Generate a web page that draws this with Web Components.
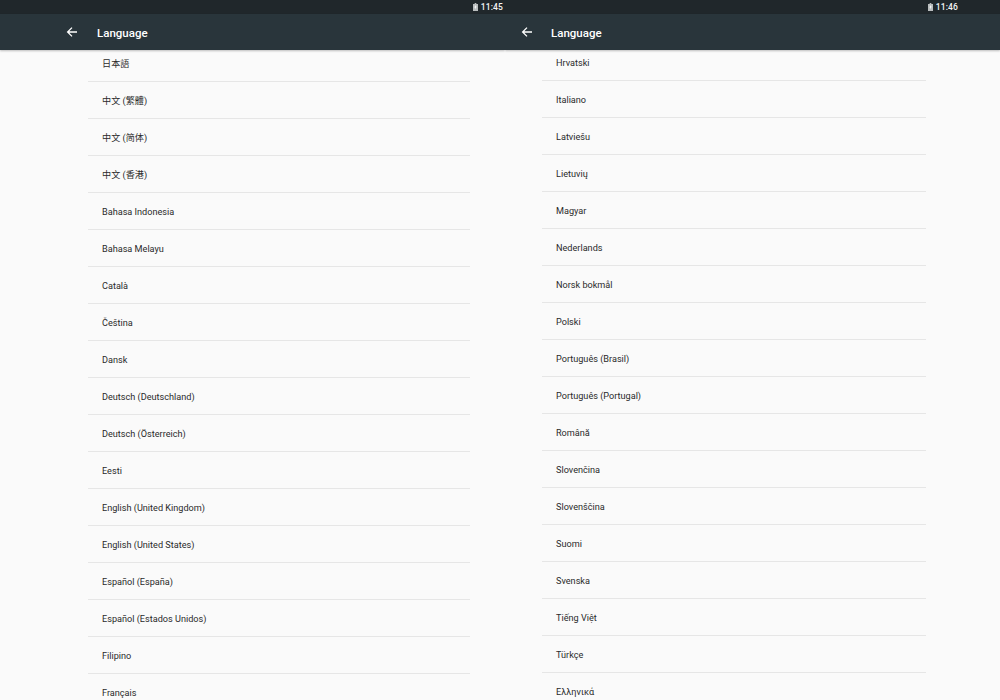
<!DOCTYPE html>
<html><head><meta charset="utf-8"><style>
html,body{margin:0;padding:0;width:1000px;height:700px;overflow:hidden;background:#fafafa}
body{font-family:Roboto,"Noto Sans CJK TC","Liberation Sans",sans-serif}
#root{display:grid;grid-template-columns:505px 495px;height:700px}
</style></head><body>
<div id="root">
<settings-panel time="11:45" list-top="-5" list-left="88" list-width="382" bar-left="66" title-gap="19" clock-right="2" items="日本語|中文 (繁體)|中文 (简体)|中文 (香港)|Bahasa Indonesia|Bahasa Melayu|Català|Čeština|Dansk|Deutsch (Deutschland)|Deutsch (Österreich)|Eesti|English (United Kingdom)|English (United States)|Español (España)|Español (Estados Unidos)|Filipino|Français"></settings-panel>
<settings-panel time="11:46" list-top="-6" list-left="37" list-width="384" bar-left="16" title-gap="18" clock-right="42" items="Hrvatski|Italiano|Latviešu|Lietuvių|Magyar|Nederlands|Norsk bokmål|Polski|Português (Brasil)|Português (Portugal)|Română|Slovenčina|Slovenščina|Suomi|Svenska|Tiếng Việt|Türkçe|Ελληνικά"></settings-panel>
</div>
<script>
class StatusBar extends HTMLElement{
  constructor(){super();this.attachShadow({mode:'open'}).innerHTML=`<style>
  :host{display:flex;justify-content:flex-end;align-items:center;gap:3px;height:14px;background:#20272b;color:#f5f6f6;font:500 8.5px/14px Roboto,sans-serif;letter-spacing:.15px}
  svg{display:block}</style>
  <svg width="5" height="8" viewBox="0 0 6 9" preserveAspectRatio="none"><path d="M2 0h2v1h2v8H0V1h2z" fill="#b9bdbe"/><path d="M3.4 2 1.6 5h1.2L2.5 7.4 4.4 4H3.2z" fill="#fff"/></svg><span><slot></slot></span>`;}
}
class AppBar extends HTMLElement{
  constructor(){super();this.attachShadow({mode:'open'}).innerHTML=`<style>
  :host{display:flex;align-items:center;height:36px;background:#29353b;color:#fff;position:relative;z-index:1;box-shadow:0 1px 2px rgba(0,0,0,.25);box-sizing:border-box}
  svg{display:block;flex:none}
  span{margin-left:var(--title-gap,18px);padding-top:2px;font:500 11.5px/34px Roboto,sans-serif}</style>
  <svg width="12" height="12" viewBox="0 0 12 12"><path d="M11 6H2M6 1.6 1.6 6 6 10.4" fill="none" stroke="#fff" stroke-width="1.3"/></svg><span><slot></slot></span>`;}
}
class LangRow extends HTMLElement{
  constructor(){super();this.attachShadow({mode:'open'}).innerHTML=`<style>
  :host{display:flex;align-items:center;box-sizing:border-box;height:37px;padding:2px 0 0 14px;border-bottom:1px solid #e6e6e6;color:#2a2a2a;font:400 9.15px/12px Roboto,"Noto Sans CJK TC",sans-serif}
  </style><slot></slot>`;}
}
class SettingsPanel extends HTMLElement{
  constructor(){super();this.attachShadow({mode:'open'}).innerHTML=`<style>
  :host{display:block;overflow:hidden;height:700px;background:#fafafa}
  </style><status-bar></status-bar><app-bar>Language</app-bar><div class="list"></div>`;}
  connectedCallback(){
    const s=this.shadowRoot,l=s.querySelector('.list'),b=s.querySelector('status-bar'),a=s.querySelector('app-bar');
    b.textContent=this.getAttribute('time');
    b.style.paddingRight=this.getAttribute('clock-right')+'px';
    a.style.paddingLeft=this.getAttribute('bar-left')+'px';
    a.style.setProperty('--title-gap',this.getAttribute('title-gap')+'px');
    l.style.margin=this.getAttribute('list-top')+'px 0 0 '+this.getAttribute('list-left')+'px';
    l.style.width=this.getAttribute('list-width')+'px';
    for(const t of this.getAttribute('items').split('|')){const r=document.createElement('lang-row');r.textContent=t;l.append(r);}
  }
}
customElements.define('status-bar',StatusBar);
customElements.define('app-bar',AppBar);
customElements.define('lang-row',LangRow);
customElements.define('settings-panel',SettingsPanel);
</script></body></html>
